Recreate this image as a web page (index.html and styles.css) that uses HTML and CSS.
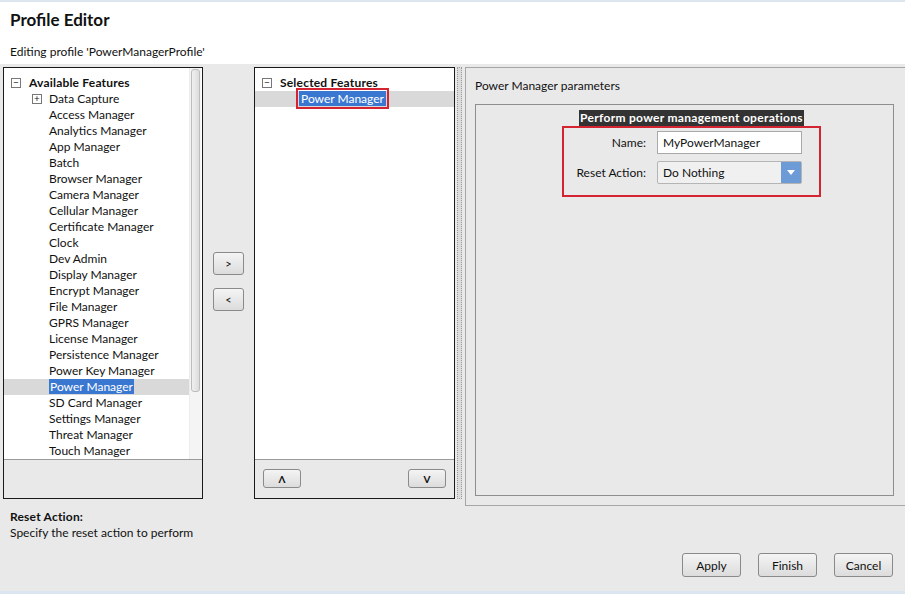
FILE: index.html
```html
<!DOCTYPE html>
<html>
<head>
  <title>Profile Editor</title>
  <link rel="stylesheet" href="styles.css">
</head>
<body>
  <div class="header">
    <h1>Profile Editor</h1>
    <p>Editing profile 'PowerManagerProfile'</p>
  </div>

  <div class="main">
    <div class="panel left-panel">
      <div class="tree">
        <div class="tree-list">
          <div class="node root"><span class="toggle">&minus;</span><b>Available Features</b></div>
          <div class="node child"><span class="toggle small">+</span>Data Capture</div>
          <div class="node leaf">Access Manager</div>
          <div class="node leaf">Analytics Manager</div>
          <div class="node leaf">App Manager</div>
          <div class="node leaf">Batch</div>
          <div class="node leaf">Browser Manager</div>
          <div class="node leaf">Camera Manager</div>
          <div class="node leaf">Cellular Manager</div>
          <div class="node leaf">Certificate Manager</div>
          <div class="node leaf">Clock</div>
          <div class="node leaf">Dev Admin</div>
          <div class="node leaf">Display Manager</div>
          <div class="node leaf">Encrypt Manager</div>
          <div class="node leaf">File Manager</div>
          <div class="node leaf">GPRS Manager</div>
          <div class="node leaf">License Manager</div>
          <div class="node leaf">Persistence Manager</div>
          <div class="node leaf">Power Key Manager</div>
          <div class="node leaf selected"><span class="sel">Power Manager</span></div>
          <div class="node leaf">SD Card Manager</div>
          <div class="node leaf">Settings Manager</div>
          <div class="node leaf">Threat Manager</div>
          <div class="node leaf">Touch Manager</div>
        </div>
        <div class="scrollbar"><div class="thumb"></div></div>
      </div>
      <div class="panel-foot"></div>
    </div>

    <div class="mover">
      <button class="btn small-btn">&gt;</button>
      <button class="btn small-btn">&lt;</button>
    </div>

    <div class="panel mid-panel">
      <div class="tree">
        <div class="tree-list">
          <div class="node root"><span class="toggle">&minus;</span><b>Selected Features</b></div>
          <div class="node selected picked"><span class="sel boxed">Power Manager</span></div>
        </div>
      </div>
      <div class="panel-foot order">
        <button class="btn order-btn">&#x39B;</button>
        <button class="btn order-btn">V</button>
      </div>
    </div>

    <div class="splitter"></div>

    <div class="params">
      <div class="params-title">Power Manager parameters</div>
      <div class="group">
        <div class="group-title"><span>Perform power management operations</span></div>
        <div class="fields">
          <div class="field">
            <label>Name:</label>
            <div class="input">MyPowerManager</div>
          </div>
          <div class="field">
            <label>Reset Action:</label>
            <div class="input select">Do Nothing<span class="arrow"></span></div>
          </div>
        </div>
      </div>
    </div>
  </div>

  <div class="footer">
    <div class="help">
      <b>Reset Action:</b>
      <span>Specify the reset action to perform</span>
    </div>
    <div class="actions">
      <button class="btn action">Apply</button>
      <button class="btn action">Finish</button>
      <button class="btn action">Cancel</button>
    </div>
  </div>
</body>
</html>
```

FILE: styles.css
```css
body {
  margin: 0;
  width: 905px;
  height: 594px;
  overflow: hidden;
  background: #e9e9e9;
  font-family: Lato, "Liberation Sans", sans-serif;
  font-size: 12px;
  color: #111;
  border-bottom: 3px solid #dbe5f0;
  box-sizing: border-box;
}
b {
  letter-spacing: 0.2px;
}
.header {
  background: #fff;
  border-top: 2px solid #dde6ee;
  height: 64px;
  padding: 7px 10px 0 10px;
  box-sizing: border-box;
}
.header h1 {
  margin: 0;
  font-size: 17px;
  font-weight: bold;
  color: #111;
}
.header p {
  margin: 14px 0 0 0;
  font-size: 12px;
}
.main {
  display: flex;
  align-items: flex-start;
  padding-top: 3px;
  height: 439px;
}
.panel {
  border: 1px solid #1a1a1a;
  height: 430px;
  display: flex;
  flex-direction: column;
}
.left-panel {
  margin-left: 3px;
  width: 198px;
}
.tree {
  background: #fff;
  height: 391px;
  border-bottom: 1px solid #9a9a9a;
  display: flex;
}
.tree-list {
  flex: 1;
  padding-top: 7px;
  overflow: hidden;
}
.node {
  height: 16px;
  line-height: 16px;
  white-space: nowrap;
  position: relative;
}
.node.root {
  padding-left: 25px;
}
.node.child {
  padding-left: 45px;
}
.node.leaf {
  padding-left: 45px;
}
.toggle {
  position: absolute;
  left: 7px;
  top: 3px;
  width: 8px;
  height: 8px;
  border: 1px solid #777;
  font-size: 10px;
  line-height: 7px;
  text-align: center;
  color: #222;
  background: #fff;
}
.toggle.small {
  left: 28px;
}
.node.selected {
  background: #d9d9d9;
}
.sel {
  background: #3a77d1;
  color: #fff;
  padding: 0 1px;
}
.scrollbar {
  width: 11px;
  margin-right: 1px;
  background: #f4f4f4;
  border-left: 1px solid #ececec;
}
.thumb {
  margin: 1px 1px 0 1px;
  height: 321px;
  border: 1px solid #bcbcbc;
  border-radius: 3px;
  background: linear-gradient(to right, #f0f0f0, #dcdcdc);
}
.panel-foot {
  flex: 1;
}
.mover {
  width: 51px;
  display: flex;
  flex-direction: column;
  align-items: center;
  padding-top: 185px;
  gap: 13px;
}
.btn {
  font-family: Lato, "Liberation Sans", sans-serif;
  font-size: 12px;
  color: #111;
  border: 1px solid #8a8a8a;
  border-radius: 3px;
  background: linear-gradient(to bottom, #f4f4f4, #dcdcdc);
  padding: 0;
}
.small-btn {
  width: 31px;
  height: 23px;
  font-size: 11px;
}
.mid-panel {
  width: 199px;
}
.node.picked {
  padding-left: 44px;
}
.boxed {
  outline: 2px solid #d42331;
  outline-offset: 1px;
  padding: 0 2px;
}
.order {
  display: flex;
  justify-content: space-between;
  padding: 9px 8px 0 8px;
}
.order-btn {
  width: 38px;
  height: 19px;
  font-size: 10px;
  font-weight: bold;
}
.splitter {
  width: 3px;
  height: 430px;
  margin: 0 3px 0 2px;
  border: 1px dotted #9a9a9a;
  background: #dcdcdc;
}
.params {
  flex: 1;
  height: 439px;
  border: 1px solid #a6a6a6;
  border-right: none;
  padding: 10px 11px 9px 9px;
  box-sizing: border-box;
  display: flex;
  flex-direction: column;
}
.params-title {
  height: 26px;
}
.group {
  flex: 1;
  border: 1px solid #8e8e8e;
  display: flex;
  flex-direction: column;
  align-items: center;
  padding-top: 5px;
  padding-left: 14px;
}
.group-title span {
  display: block;
  background: #333;
  color: #fff;
  font-weight: bold;
  letter-spacing: 0.3px;
  padding: 0 1px;
  line-height: 16px;
}
.fields {
  border: 2px solid #d42331;
  padding: 3px 17px 11px 10px;
  display: flex;
  flex-direction: column;
  gap: 7px;
}
.field {
  display: flex;
  align-items: center;
}
.field label {
  width: 72px;
  text-align: right;
  margin-right: 11px;
}
.input {
  width: 138px;
  height: 21px;
  line-height: 21px;
  border: 1px solid #a9a9a9;
  background: #fff;
  padding-left: 5px;
  position: relative;
}
.select {
  background: #f0f0f0;
  border-color: #b5b5b5;
  border-radius: 2px;
}
.arrow {
  position: absolute;
  right: 0;
  top: 0;
  width: 20px;
  height: 21px;
  background: #6c9bd6;
}
.arrow::after {
  content: "";
  position: absolute;
  left: 6px;
  top: 8px;
  border-left: 4px solid transparent;
  border-right: 4px solid transparent;
  border-top: 5px solid #fff;
}
.footer {
  height: 88px;
  padding: 3px 10px 0 10px;
  box-sizing: border-box;
}
.help b,
.help span {
  display: block;
  line-height: 16px;
}
.actions {
  display: flex;
  justify-content: flex-end;
  gap: 17px;
  margin-top: 12px;
  padding-right: 2px;
}
.action {
  width: 59px;
  height: 24px;
  font-size: 12px;
}
```
